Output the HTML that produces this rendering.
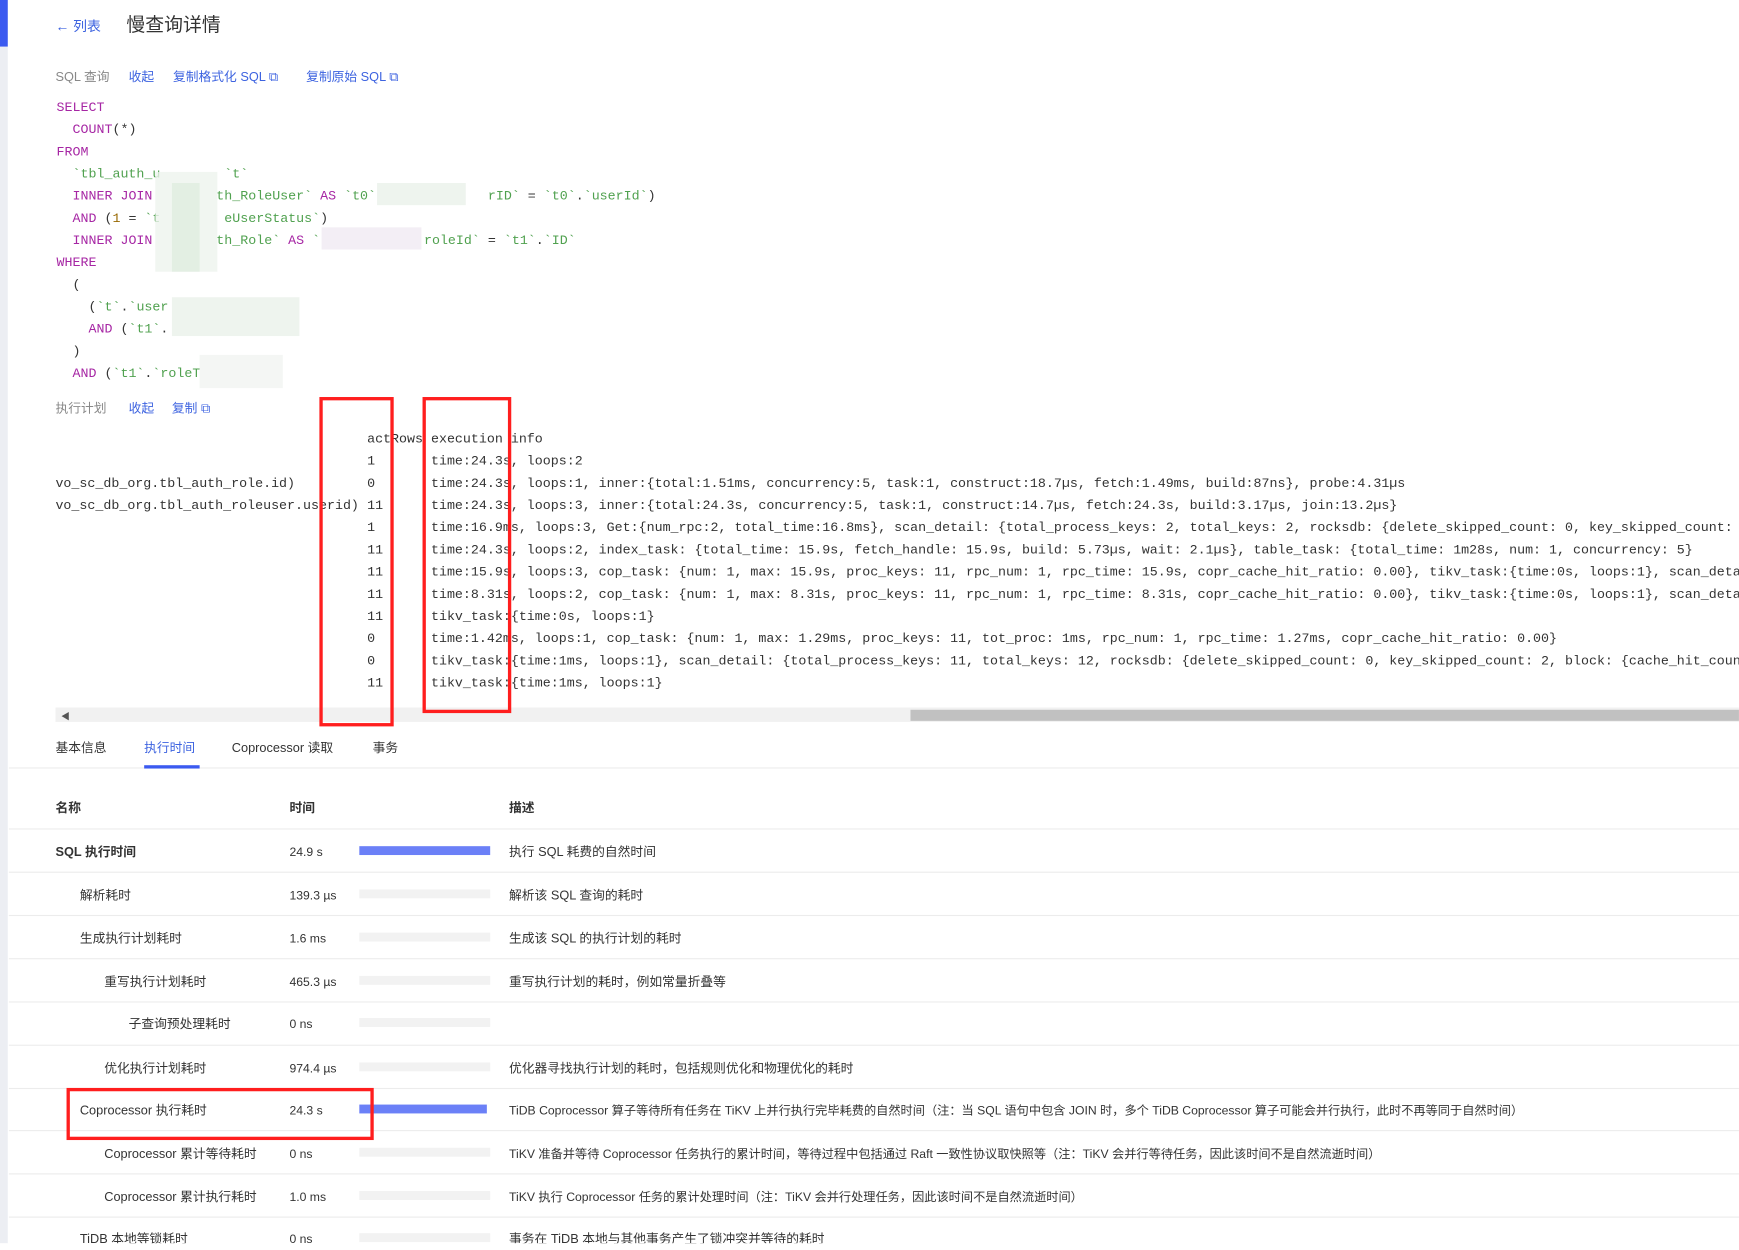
<!DOCTYPE html>
<html><head><meta charset="utf-8"><style>
body{margin:0;background:#fff;overflow:hidden;width:1739px;height:1248px;}
#w{position:absolute;left:0;top:0;width:1568px;height:1126px;transform:scale(1.109);transform-origin:0 0;font-family:"Liberation Sans","Noto Sans CJK SC",sans-serif;color:#333;}
.a{position:absolute;white-space:pre;line-height:16px;margin-top:1.5px;}
.m{font-family:"Liberation Mono","Noto Sans CJK SC",monospace;font-size:12px;color:#333;}
.k{color:#a626a4}.s{color:#50a14f}.n{color:#986801}
.b{color:#3d63e0}.g{color:#888}
.t{font-size:11.5px}
.bl{position:absolute;}
.rb{position:absolute;border:3px solid #ff1e1e;box-sizing:border-box;}
.hl{position:absolute;left:8px;width:1560px;height:1px;background:#ececec;}
.bar{position:absolute;left:324px;width:118px;height:8px;background:#f2f2f2;}
</style></head><body><div id="w">
<div class="bl" style="left:0;top:0;width:7px;height:1126px;background:#eceef3"></div>
<div class="bl" style="left:0;top:0;width:7px;height:42px;background:#3b5af0"></div>
<div class="a b" style="left:50px;top:14px;font-size:12.5px">← 列表</div>
<div class="a" style="left:114px;top:13px;font-size:17px;color:#333">慢查询详情</div>
<div class="a t g" style="left:50px;top:60px">SQL 查询</div>
<div class="a t b" style="left:116px;top:60px">收起</div>
<div class="a t b" style="left:156px;top:60px">复制格式化 SQL ⧉</div>
<div class="a t b" style="left:276px;top:60px">复制原始 SQL ⧉</div>
<div class="a m" style="left:51px;top:87px"><span class="k">SELECT</span></div>
<div class="a m" style="left:51px;top:107px">  <span class="k">COUNT</span>(*)</div>
<div class="a m" style="left:51px;top:127px"><span class="k">FROM</span></div>
<div class="a m" style="left:51px;top:147px"><span class="s">  `tbl_auth_u        `t`</span></div>
<div class="a m" style="left:51px;top:167px">  <span class="k">INNER JOIN</span> <span class="s">       th_RoleUser`</span> <span class="k">AS</span> <span class="s">`t0`</span>              <span class="s">rID`</span> = <span class="s">`t0`</span>.<span class="s">`userId`</span>)</div>
<div class="a m" style="left:51px;top:187px">  <span class="k">AND</span> (<span class="n">1</span> = <span class="s">`t        eUserStatus`</span>)</div>
<div class="a m" style="left:51px;top:207px">  <span class="k">INNER JOIN</span> <span class="s">       th_Role`</span> <span class="k">AS</span> <span class="s">`</span>             <span class="s">roleId`</span> = <span class="s">`t1`</span>.<span class="s">`ID`</span></div>
<div class="a m" style="left:51px;top:227px"><span class="k">WHERE</span></div>
<div class="a m" style="left:51px;top:247px">  (</div>
<div class="a m" style="left:51px;top:267px">    (<span class="s">`t`</span>.<span class="s">`user</span></div>
<div class="a m" style="left:51px;top:287px">    <span class="k">AND</span> (<span class="s">`t1`</span>.</div>
<div class="a m" style="left:51px;top:307px">  )</div>
<div class="a m" style="left:51px;top:327px">  <span class="k">AND</span> (<span class="s">`t1`</span>.<span class="s">`roleTy</span></div>
<div class="bl" style="left:140px;top:155px;width:56px;height:90px;background:#eef4ee;opacity:.8"></div>
<div class="bl" style="left:155px;top:165px;width:25px;height:80px;background:#e3efe3"></div>
<div class="bl" style="left:290px;top:205px;width:90px;height:20px;background:#f3eef5"></div>
<div class="bl" style="left:340px;top:165px;width:80px;height:20px;background:#eef4ee"></div>
<div class="bl" style="left:155px;top:268px;width:115px;height:35px;background:#eef4ee"></div>
<div class="bl" style="left:180px;top:320px;width:75px;height:30px;background:#f4f6f4"></div>
<div class="a t g" style="left:50px;top:359px">执行计划</div>
<div class="a t b" style="left:116px;top:359px">收起</div>
<div class="a t b" style="left:155px;top:359px">复制 ⧉</div>
<div class="a m" style="left:331px;top:386px">actRows execution info</div>
<div class="a m" style="left:331px;top:406px">1       time:24.3s, loops:2</div>
<div class="a m" style="left:50px;top:426px">vo_sc_db_org.tbl_auth_role.id)</div>
<div class="a m" style="left:331px;top:426px">0       time:24.3s, loops:1, inner:{total:1.51ms, concurrency:5, task:1, construct:18.7µs, fetch:1.49ms, build:87ns}, probe:4.31µs</div>
<div class="a m" style="left:50px;top:446px">vo_sc_db_org.tbl_auth_roleuser.userid)</div>
<div class="a m" style="left:331px;top:446px">11      time:24.3s, loops:3, inner:{total:24.3s, concurrency:5, task:1, construct:14.7µs, fetch:24.3s, build:3.17µs, join:13.2µs}</div>
<div class="a m" style="left:331px;top:466px">1       time:16.9ms, loops:3, Get:{num_rpc:2, total_time:16.8ms}, scan_detail: {total_process_keys: 2, total_keys: 2, rocksdb: {delete_skipped_count: 0, key_skipped_count: 0</div>
<div class="a m" style="left:331px;top:486px">11      time:24.3s, loops:2, index_task: {total_time: 15.9s, fetch_handle: 15.9s, build: 5.73µs, wait: 2.1µs}, table_task: {total_time: 1m28s, num: 1, concurrency: 5}</div>
<div class="a m" style="left:331px;top:506px">11      time:15.9s, loops:3, cop_task: {num: 1, max: 15.9s, proc_keys: 11, rpc_num: 1, rpc_time: 15.9s, copr_cache_hit_ratio: 0.00}, tikv_task:{time:0s, loops:1}, scan_detail</div>
<div class="a m" style="left:331px;top:526px">11      time:8.31s, loops:2, cop_task: {num: 1, max: 8.31s, proc_keys: 11, rpc_num: 1, rpc_time: 8.31s, copr_cache_hit_ratio: 0.00}, tikv_task:{time:0s, loops:1}, scan_detail</div>
<div class="a m" style="left:331px;top:546px">11      tikv_task:{time:0s, loops:1}</div>
<div class="a m" style="left:331px;top:566px">0       time:1.42ms, loops:1, cop_task: {num: 1, max: 1.29ms, proc_keys: 11, tot_proc: 1ms, rpc_num: 1, rpc_time: 1.27ms, copr_cache_hit_ratio: 0.00}</div>
<div class="a m" style="left:331px;top:586px">0       tikv_task:{time:1ms, loops:1}, scan_detail: {total_process_keys: 11, total_keys: 12, rocksdb: {delete_skipped_count: 0, key_skipped_count: 2, block: {cache_hit_count</div>
<div class="a m" style="left:331px;top:606px">11      tikv_task:{time:1ms, loops:1}</div>
<div class="bl" style="left:1568px;top:380px;width:200px;height:240px;background:#fff"></div>
<div class="bl" style="left:50px;top:638px;width:1518px;height:13px;background:#f1f1f1"></div>
<div class="bl" style="left:821px;top:640px;width:747px;height:10px;background:#c1c1c1"></div>
<div class="a" style="left:55px;top:637px;font-size:8px;color:#555">◀</div>
<div class="rb" style="left:288px;top:358px;width:67px;height:297px"></div>
<div class="rb" style="left:381px;top:358px;width:80px;height:285px"></div>
<div class="a t" style="left:50px;top:665px">基本信息</div>
<div class="a t b" style="left:130px;top:665px">执行时间</div>
<div class="a t" style="left:209px;top:665px">Coprocessor 读取</div>
<div class="a t" style="left:336px;top:665px">事务</div>
<div class="hl" style="top:692px"></div>
<div class="bl" style="left:130px;top:690px;width:50px;height:3px;background:#3b5af0"></div>
<div class="a t" style="left:50px;top:719px;font-weight:bold">名称</div>
<div class="a t" style="left:261px;top:719px;font-weight:bold">时间</div>
<div class="a t" style="left:459px;top:719px;font-weight:bold">描述</div>
<div class="hl" style="top:747px"></div>
<div class="hl" style="top:786px"></div><div class="hl" style="top:825px"></div><div class="hl" style="top:864px"></div><div class="hl" style="top:903px"></div><div class="hl" style="top:942px"></div><div class="hl" style="top:981px"></div><div class="hl" style="top:1019px"></div><div class="hl" style="top:1058px"></div><div class="hl" style="top:1097px"></div>
<div class="a t" style="left:50px;top:759px;font-weight:bold">SQL 执行时间</div><div class="a t" style="left:261px;top:759px;font-size:11px">24.9 s</div><div class="bar" style="top:763px;background:#6b80f7"></div><div class="a t" style="left:459px;top:759px">执行 SQL 耗费的自然时间</div>
<div class="a t" style="left:72px;top:798px">解析耗时</div><div class="a t" style="left:261px;top:798px;font-size:11px">139.3 µs</div><div class="bar" style="top:802px"></div><div class="a t" style="left:459px;top:798px">解析该 SQL 查询的耗时</div>
<div class="a t" style="left:72px;top:837px">生成执行计划耗时</div><div class="a t" style="left:261px;top:837px;font-size:11px">1.6 ms</div><div class="bar" style="top:841px"></div><div class="a t" style="left:459px;top:837px">生成该 SQL 的执行计划的耗时</div>
<div class="a t" style="left:94px;top:876px">重写执行计划耗时</div><div class="a t" style="left:261px;top:876px;font-size:11px">465.3 µs</div><div class="bar" style="top:880px"></div><div class="a t" style="left:459px;top:876px">重写执行计划的耗时，例如常量折叠等</div>
<div class="a t" style="left:116px;top:914px">子查询预处理耗时</div><div class="a t" style="left:261px;top:914px;font-size:11px">0 ns</div><div class="bar" style="top:918px"></div>
<div class="a t" style="left:94px;top:954px">优化执行计划耗时</div><div class="a t" style="left:261px;top:954px;font-size:11px">974.4 µs</div><div class="bar" style="top:958px"></div><div class="a t" style="left:459px;top:954px">优化器寻找执行计划的耗时，包括规则优化和物理优化的耗时</div>
<div class="a t" style="left:72px;top:992px">Coprocessor 执行耗时</div><div class="a t" style="left:261px;top:992px;font-size:11px">24.3 s</div><div class="bar" style="top:996px;background:#6b80f7;width:115px"></div><div class="a t" style="left:459px;top:992px;font-size:11px">TiDB Coprocessor 算子等待所有任务在 TiKV 上并行执行完毕耗费的自然时间（注：当 SQL 语句中包含 JOIN 时，多个 TiDB Coprocessor 算子可能会并行执行，此时不再等同于自然时间）</div>
<div class="a t" style="left:94px;top:1031px">Coprocessor 累计等待耗时</div><div class="a t" style="left:261px;top:1031px;font-size:11px">0 ns</div><div class="bar" style="top:1035px"></div><div class="a t" style="left:459px;top:1031px;font-size:11px">TiKV 准备并等待 Coprocessor 任务执行的累计时间，等待过程中包括通过 Raft 一致性协议取快照等（注：TiKV 会并行等待任务，因此该时间不是自然流逝时间）</div>
<div class="a t" style="left:94px;top:1070px">Coprocessor 累计执行耗时</div><div class="a t" style="left:261px;top:1070px;font-size:11px">1.0 ms</div><div class="bar" style="top:1074px"></div><div class="a t" style="left:459px;top:1070px;font-size:11px">TiKV 执行 Coprocessor 任务的累计处理时间（注：TiKV 会并行处理任务，因此该时间不是自然流逝时间）</div>
<div class="a t" style="left:72px;top:1108px">TiDB 本地等锁耗时</div><div class="a t" style="left:261px;top:1108px;font-size:11px">0 ns</div><div class="bar" style="top:1112px"></div><div class="a t" style="left:459px;top:1108px">事务在 TiDB 本地与其他事务产生了锁冲突并等待的耗时</div>
<div class="bl" style="left:0;top:1121px;width:1568px;height:6px;background:#fff"></div>
<div class="rb" style="left:60px;top:981px;width:277px;height:47px"></div>
</div></body></html>
